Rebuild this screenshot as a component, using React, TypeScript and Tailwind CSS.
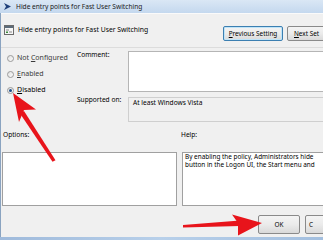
import React from 'react'

function Radio({ checked }: { checked?: boolean }) {
    return (
        <span className="w-[7px] h-[7px] rounded-full border border-[#9a9a9a] bg-gradient-to-br from-[#e2e2e2] to-[#fafafa] flex items-center justify-center shrink-0">
            {checked && <span className="w-[3px] h-[3px] rounded-full bg-[#1d4f8a]" />}
        </span>
    )
}

function Btn({ children, primary, className }: { children: React.ReactNode; primary?: boolean; className?: string }) {
    return (
        <div
            className={`shrink-0 rounded-[2px] border flex items-center justify-center bg-gradient-to-b from-[#f4f4f4] via-[#ebebeb] to-[#d9d9d9] ${primary ? 'border-[#3c7fb1] shadow-[inset_0_0_0_1px_#bfe4f8]' : 'border-[#8a8a8a]'} ${className ?? ''}`}
        >
            {children}
        </div>
    )
}

export default function App() {
    return (
        <div className="w-[323px] h-[240px] relative overflow-hidden bg-[#a9c4e2] font-['Noto_Sans',sans-serif] text-[7px] text-black leading-[8px]">
            {/* Title bar */}
            <div className="h-[13px] flex items-center pl-[3px] bg-gradient-to-b from-[#dae7f5] to-[#c4d8ee]">
                <svg width="9" height="9" viewBox="0 0 9 9">
                    <path d="M1 1 L8 4.5 L1 8 L3 4.5 Z" fill="#1e3f7a" />
                </svg>
                <span className="ml-[4px] text-[6.6px] text-[#1a1a1a]">Hide entry points for Fast User Switching</span>
            </div>

            <div className="flex h-[224px]">
                <div className="w-[4px] bg-[#b4cce8] border-r border-[#8aa3c0]" />
                <div className="flex-1 bg-[#f0f0f0] flex flex-col border-t border-[#fafafa]">
                    {/* Header */}
                    <div className="h-[34px] flex items-start pt-[11px] pl-[3px] border-b border-[#dcdcdc]">
                        <svg width="10" height="10" viewBox="0 0 10 10" className="shrink-0">
                            <rect x="0.5" y="0.5" width="9" height="9" fill="#f6f6f6" stroke="#6b6b6b" />
                            <rect x="1" y="1" width="8" height="2" fill="#5c6b7a" />
                            <rect x="2" y="4.5" width="3" height="1" fill="#8a8a8a" />
                            <rect x="2" y="6.5" width="2" height="1.5" fill="#3b8a3b" />
                            <rect x="5" y="6.5" width="3" height="1" fill="#8a8a8a" />
                        </svg>
                        <span className="ml-[4px] w-[205px] shrink-0 text-[6.8px] leading-[10px]">Hide entry points for Fast User Switching</span>
                        <Btn primary className="w-[60px] h-[15px] mt-[1px] text-[6.4px]">
                            <span><span className="underline">P</span>revious Setting</span>
                        </Btn>
                        <Btn className="w-[60px] h-[15px] mt-[1px] ml-[4px] text-[6.4px] justify-start pl-[6px] overflow-hidden">
                            <span className="whitespace-nowrap"><span className="underline">N</span>ext Set</span>
                        </Btn>
                    </div>

                    {/* Main settings */}
                    <div className="flex">
                        <div className="w-[76px] shrink-0 flex flex-col pt-[2px] pl-[6px]">
                            <div className="h-[16px] flex items-center gap-[3px] text-[#3a3a3a]">
                                <Radio />
                                <span>Not <span className="underline">C</span>onfigured</span>
                            </div>
                            <div className="h-[16px] flex items-center gap-[3px] text-[#3a3a3a]">
                                <Radio />
                                <span><span className="underline">E</span>nabled</span>
                            </div>
                            <div className="h-[16px] flex items-center gap-[3px]">
                                <Radio checked />
                                <span><span className="underline">D</span>isabled</span>
                            </div>
                        </div>
                        <div className="flex-1 flex flex-col pt-[3px]">
                            <div className="flex items-start">
                                <span className="w-[51px] shrink-0 text-[6.6px]">Comment:</span>
                                <div className="w-[200px] h-[41px] shrink-0 bg-white border border-[#b5b5b5]" />
                            </div>
                            <div className="flex items-start mt-[5px]">
                                <span className="w-[51px] shrink-0 mt-[-1px] text-[6.6px]">Supported on:</span>
                                <div className="w-[200px] h-[25px] shrink-0 border border-[#cfcfcf] pl-[4px] pt-[1px] text-[6.6px]">
                                    At least Windows Vista
                                </div>
                            </div>
                        </div>
                    </div>

                    {/* Options / Help labels */}
                    <div className="flex mt-[9px] text-[6.6px]">
                        <span className="w-[180px] shrink-0 pl-[2px]">Options:</span>
                        <span>Help:</span>
                    </div>

                    {/* Options / Help boxes */}
                    <div className="flex gap-[5px] mt-[13px] h-[54px] pl-[1px]">
                        <div className="w-[175px] shrink-0 bg-white border border-[#a0a0a0]" />
                        <div className="w-[200px] shrink-0 bg-white border border-[#a0a0a0] pl-[2px] text-[6.4px] leading-[8px] overflow-hidden">
                            <div className="whitespace-nowrap">By enabling the policy, Administrators hide</div>
                            <div className="whitespace-nowrap">button in the Logon UI, the Start menu and</div>
                        </div>
                    </div>

                    {/* Footer */}
                    <div className="flex mt-[9px] pl-[257px]">
                        <Btn className="w-[42px] h-[19px] text-[6.4px]">OK</Btn>
                        <Btn className="w-[42px] h-[19px] ml-[5px] text-[6.4px] justify-start pl-[3px] overflow-hidden">C</Btn>
                    </div>
                </div>
            </div>
            <div className="h-[3px] bg-gradient-to-r from-[#9fbadb] via-[#b8d0ea] to-[#a3bfdf]" />

            {/* Red annotation arrows */}
            <svg className="absolute inset-0 pointer-events-none" width="323" height="240" viewBox="0 0 323 240">
                <polygon points="52.5,161.8 55.5,160.2 24,111 20,113.5" fill="#e8141b" />
                <polygon points="13,93 36,109.5 24,110 19,122" fill="#e8141b" />
                <polygon points="183,227.5 183,225 240,220.5 240,226" fill="#e8141b" />
                <polygon points="262,223 232,214.5 238,223 238,235.5" fill="#e8141b" />
            </svg>
        </div>
    )
}
